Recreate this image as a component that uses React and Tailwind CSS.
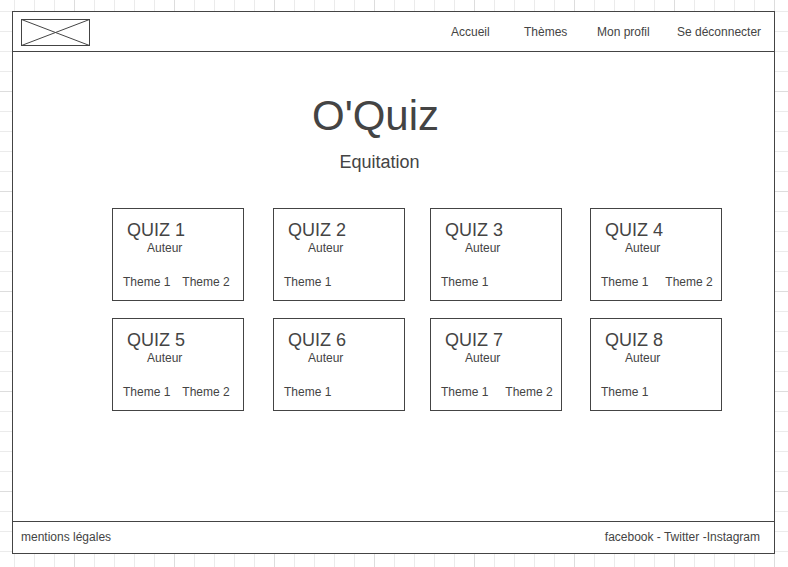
const quizzes = [
  { id: 1, themes: ["Theme 1", "Theme 2"], gap: "gap-3" },
  { id: 2, themes: ["Theme 1"], gap: "gap-3" },
  { id: 3, themes: ["Theme 1"], gap: "gap-3" },
  { id: 4, themes: ["Theme 1", "Theme 2"], gap: "gap-[17px]" },
  { id: 5, themes: ["Theme 1", "Theme 2"], gap: "gap-3" },
  { id: 6, themes: ["Theme 1"], gap: "gap-3" },
  { id: 7, themes: ["Theme 1", "Theme 2"], gap: "gap-[17px]" },
  { id: 8, themes: ["Theme 1"], gap: "gap-3" },
];

function Logo() {
  return (
    <svg
      width="69"
      height="27"
      viewBox="0 0 69 27"
      fill="none"
      stroke="#444444"
      role="img"
      aria-label="Logo"
    >
      <rect x="0.5" y="0.5" width="68" height="26" />
      <path d="M0.5 0.5L68.5 26.5M0.5 26.5L68.5 0.5" />
    </svg>
  );
}

function QuizCard({ quiz }) {
  return (
    <article className="flex h-[93px] w-[132px] flex-col border border-[#444444] px-[10px] pt-[11px] pb-[10px]">
      <h3 className="pl-1 text-lg leading-5">QUIZ {quiz.id}</h3>
      <p className="pl-6 leading-4">Auteur</p>
      <ul className={`mt-auto flex whitespace-nowrap leading-4 ${quiz.gap}`}>
        {quiz.themes.map((theme) => (
          <li key={theme}>{theme}</li>
        ))}
      </ul>
    </article>
  );
}

export default function App() {
  return (
    <div
      className="flex min-h-screen flex-col bg-white pt-[11px] pr-[13px] pb-[13px] pl-3 font-['Liberation_Sans',Arial,sans-serif] text-xs text-[#444444] bg-[linear-gradient(to_right,#dddddd_1px,transparent_1px),linear-gradient(to_bottom,#dddddd_1px,transparent_1px),linear-gradient(to_right,#ebebeb_1px,transparent_1px),linear-gradient(to_bottom,#ebebeb_1px,transparent_1px)] bg-[length:100px_100px,100px_100px,20px_20px,20px_20px] bg-[position:74px_91px,74px_91px,14px_11px,14px_11px]"
    >
      <div className="flex grow flex-col border border-[#444444] bg-white">
        <header className="flex h-10 items-start justify-between border-b border-[#444444] pt-[7px] pr-[11px] pl-2">
          <a href="#accueil">
            <Logo />
          </a>
          <nav className="grid grid-cols-[73px_73px_80px_86px] whitespace-nowrap leading-[26px]">
            <a href="#accueil">Accueil</a>
            <a href="#themes">Thèmes</a>
            <a href="#profil">Mon profil</a>
            <a href="#deconnexion">Se déconnecter</a>
          </nav>
        </header>

        <main className="grow pt-10">
          <h1 className="pr-9 text-center text-[42px] leading-12">O'Quiz</h1>
          <h2 className="mt-3 pr-7 text-center text-lg leading-5">Equitation</h2>
          <section className="mt-9 grid grid-cols-[161fr_157fr_160fr_132fr] gap-y-[17px] pr-[52px] pl-[99px]">
            {quizzes.map((quiz) => (
              <QuizCard key={quiz.id} quiz={quiz} />
            ))}
          </section>
        </main>

        <footer className="flex h-8 items-center justify-between border-t border-[#444444] pr-[14px] pb-0.5 pl-2 leading-4">
          <a href="#mentions">mentions légales</a>
          <p>
            <a href="#facebook">facebook</a> - <a href="#twitter">Twitter</a> -
            <a href="#instagram">Instagram</a>
          </p>
        </footer>
      </div>
    </div>
  );
}
